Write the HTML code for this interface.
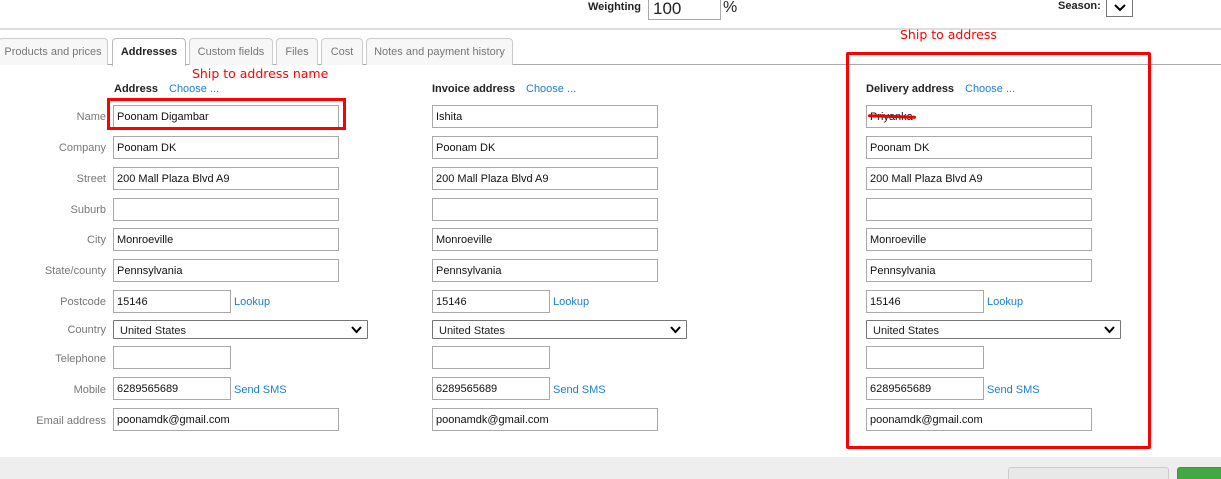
<!DOCTYPE html>
<html><head><meta charset="utf-8"><style>
*{box-sizing:border-box;margin:0;padding:0}
html,body{width:1221px;height:479px;overflow:hidden}
body{position:relative;background:#fff;font-family:"Liberation Sans",Arial,sans-serif;font-size:11px;color:#222}
.a{position:absolute;white-space:nowrap}
.in{position:absolute;border:1px solid #a9a9a9;background:#fff;height:23px;padding:5px 0 0 3px;font-size:11px;color:#111;white-space:nowrap}
.w{width:226px}.s{width:118px}
.sel{position:absolute;border:1px solid #767676;height:19px;width:255px;padding:4px 0 0 6px;border-radius:1px}
.sel svg{position:absolute;right:5px;top:5px}
.lb{position:absolute;width:100px;left:6px;text-align:right;color:#777}
.lk{position:absolute;color:#1a7fd0}
.h{position:absolute;font-weight:bold;color:#222}
.tab{position:absolute;top:38px;height:27px;border:1px solid #ccc;border-bottom:none;border-radius:4px 4px 0 0;background:#f7f7f7;color:#777;padding-top:7px;text-align:center}
.red{color:#f00;font-family:"DejaVu Sans",sans-serif;font-size:12.5px}
</style></head><body>
<div class="a" style="left:0;top:28px;width:1221px;height:2px;background:#ddd"></div>
<div class="a" style="left:588px;top:1px;font-weight:bold">Weighting</div>
<div class="a" style="left:648px;top:-2px;width:73px;height:22px;border:1px solid #a9a9a9;font-size:17px;padding-left:4px;color:#222">100</div>
<div class="a" style="left:723px;top:-1px;font-size:16px">%</div>
<div class="a" style="left:1058px;top:0px;font-weight:bold">Season:</div>
<div class="a" style="left:1106px;top:-2px;width:27px;height:19px;border:1px solid #767676"><svg width="12" height="8" style="position:absolute;left:7px;top:5px"><path d="M1 1L6 6L11 1" stroke="#000" stroke-width="2" fill="none"/></svg></div>

<div class="a" style="left:0;top:64px;width:1221px;height:1px;background:#aaa"></div>
<div class="tab" style="left:-2px;width:110px">Products and prices</div>
<div class="tab" style="left:112px;width:74px;height:28px;background:#fff;color:#222;font-weight:bold;border-color:#bbb">Addresses</div>
<div class="tab" style="left:189px;width:84px">Custom fields</div>
<div class="tab" style="left:276px;width:42px">Files</div>
<div class="tab" style="left:321px;width:42px">Cost</div>
<div class="tab" style="left:366px;width:147px">Notes and payment history</div>

<div class="a red" style="left:192px;top:66px">Ship to address name</div>
<div class="a red" style="left:900px;top:27px">Ship to address</div>

<div class="h" style="left:114px;top:83px">Address</div><div class="lk" style="left:169px;top:83px">Choose ...</div>
<div class="h" style="left:432px;top:83px">Invoice address</div><div class="lk" style="left:526px;top:83px">Choose ...</div>
<div class="h" style="left:866px;top:83px">Delivery address</div><div class="lk" style="left:965px;top:83px">Choose ...</div>

<div class="lb" style="top:111px">Name</div>
<div class="lb" style="top:142px">Company</div>
<div class="lb" style="top:173px">Street</div>
<div class="lb" style="top:204px">Suburb</div>
<div class="lb" style="top:234px">City</div>
<div class="lb" style="top:265px">State/county</div>
<div class="lb" style="top:296px">Postcode</div>
<div class="lb" style="top:324px">Country</div>
<div class="lb" style="top:353px">Telephone</div>
<div class="lb" style="top:384px">Mobile</div>
<div class="lb" style="top:415px">Email address</div>

<div class="in w" style="left:113px;top:105px">Poonam Digambar</div>
<div class="in w" style="left:113px;top:136px">Poonam DK</div>
<div class="in w" style="left:113px;top:167px">200 Mall Plaza Blvd A9</div>
<div class="in w" style="left:113px;top:198px"></div>
<div class="in w" style="left:113px;top:228px">Monroeville</div>
<div class="in w" style="left:113px;top:259px">Pennsylvania</div>
<div class="in s" style="left:113px;top:290px">15146</div><div class="lk" style="left:234px;top:296px">Lookup</div>
<div class="sel" style="left:113px;top:320px">United States<svg width="11" height="8"><path d="M1 1L5.5 6L10 1" stroke="#000" stroke-width="2" fill="none"/></svg></div>
<div class="in s" style="left:113px;top:346px"></div>
<div class="in s" style="left:113px;top:377px">6289565689</div><div class="lk" style="left:234px;top:384px">Send SMS</div>
<div class="in w" style="left:113px;top:408px">poonamdk@gmail.com</div>

<div class="in w" style="left:432px;top:105px">Ishita</div>
<div class="in w" style="left:432px;top:136px">Poonam DK</div>
<div class="in w" style="left:432px;top:167px">200 Mall Plaza Blvd A9</div>
<div class="in w" style="left:432px;top:198px"></div>
<div class="in w" style="left:432px;top:228px">Monroeville</div>
<div class="in w" style="left:432px;top:259px">Pennsylvania</div>
<div class="in s" style="left:432px;top:290px">15146</div><div class="lk" style="left:553px;top:296px">Lookup</div>
<div class="sel" style="left:432px;top:320px">United States<svg width="11" height="8"><path d="M1 1L5.5 6L10 1" stroke="#000" stroke-width="2" fill="none"/></svg></div>
<div class="in s" style="left:432px;top:346px"></div>
<div class="in s" style="left:432px;top:377px">6289565689</div><div class="lk" style="left:553px;top:384px">Send SMS</div>
<div class="in w" style="left:432px;top:408px">poonamdk@gmail.com</div>

<div class="in w" style="left:866px;top:105px">Priyanka</div>
<div class="a" style="left:868px;top:115px;width:48px;height:3px;background:#e00;border-radius:2px;transform:rotate(2deg)"></div>
<div class="in w" style="left:866px;top:136px">Poonam DK</div>
<div class="in w" style="left:866px;top:167px">200 Mall Plaza Blvd A9</div>
<div class="in w" style="left:866px;top:198px"></div>
<div class="in w" style="left:866px;top:228px">Monroeville</div>
<div class="in w" style="left:866px;top:259px">Pennsylvania</div>
<div class="in s" style="left:866px;top:290px">15146</div><div class="lk" style="left:987px;top:296px">Lookup</div>
<div class="sel" style="left:866px;top:320px">United States<svg width="11" height="8"><path d="M1 1L5.5 6L10 1" stroke="#000" stroke-width="2" fill="none"/></svg></div>
<div class="in s" style="left:866px;top:346px"></div>
<div class="in s" style="left:866px;top:377px">6289565689</div><div class="lk" style="left:987px;top:384px">Send SMS</div>
<div class="in w" style="left:866px;top:408px">poonamdk@gmail.com</div>

<div class="a" style="left:107px;top:98px;width:239px;height:32px;border:3px solid #f00"></div>
<div class="a" style="left:846px;top:52px;width:305px;height:397px;border:3px solid #f00;border-radius:2px"></div>

<div class="a" style="left:0;top:457px;width:1221px;height:22px;background:#eee"></div>
<div class="a" style="left:1008px;top:467px;width:161px;height:20px;background:#e8e8e8;border:1px solid #ccc;border-radius:3px"></div>
<div class="a" style="left:1177px;top:467px;width:50px;height:20px;background:#43a843;border:1px solid #3a9a3a;border-radius:3px"></div>
</body></html>
